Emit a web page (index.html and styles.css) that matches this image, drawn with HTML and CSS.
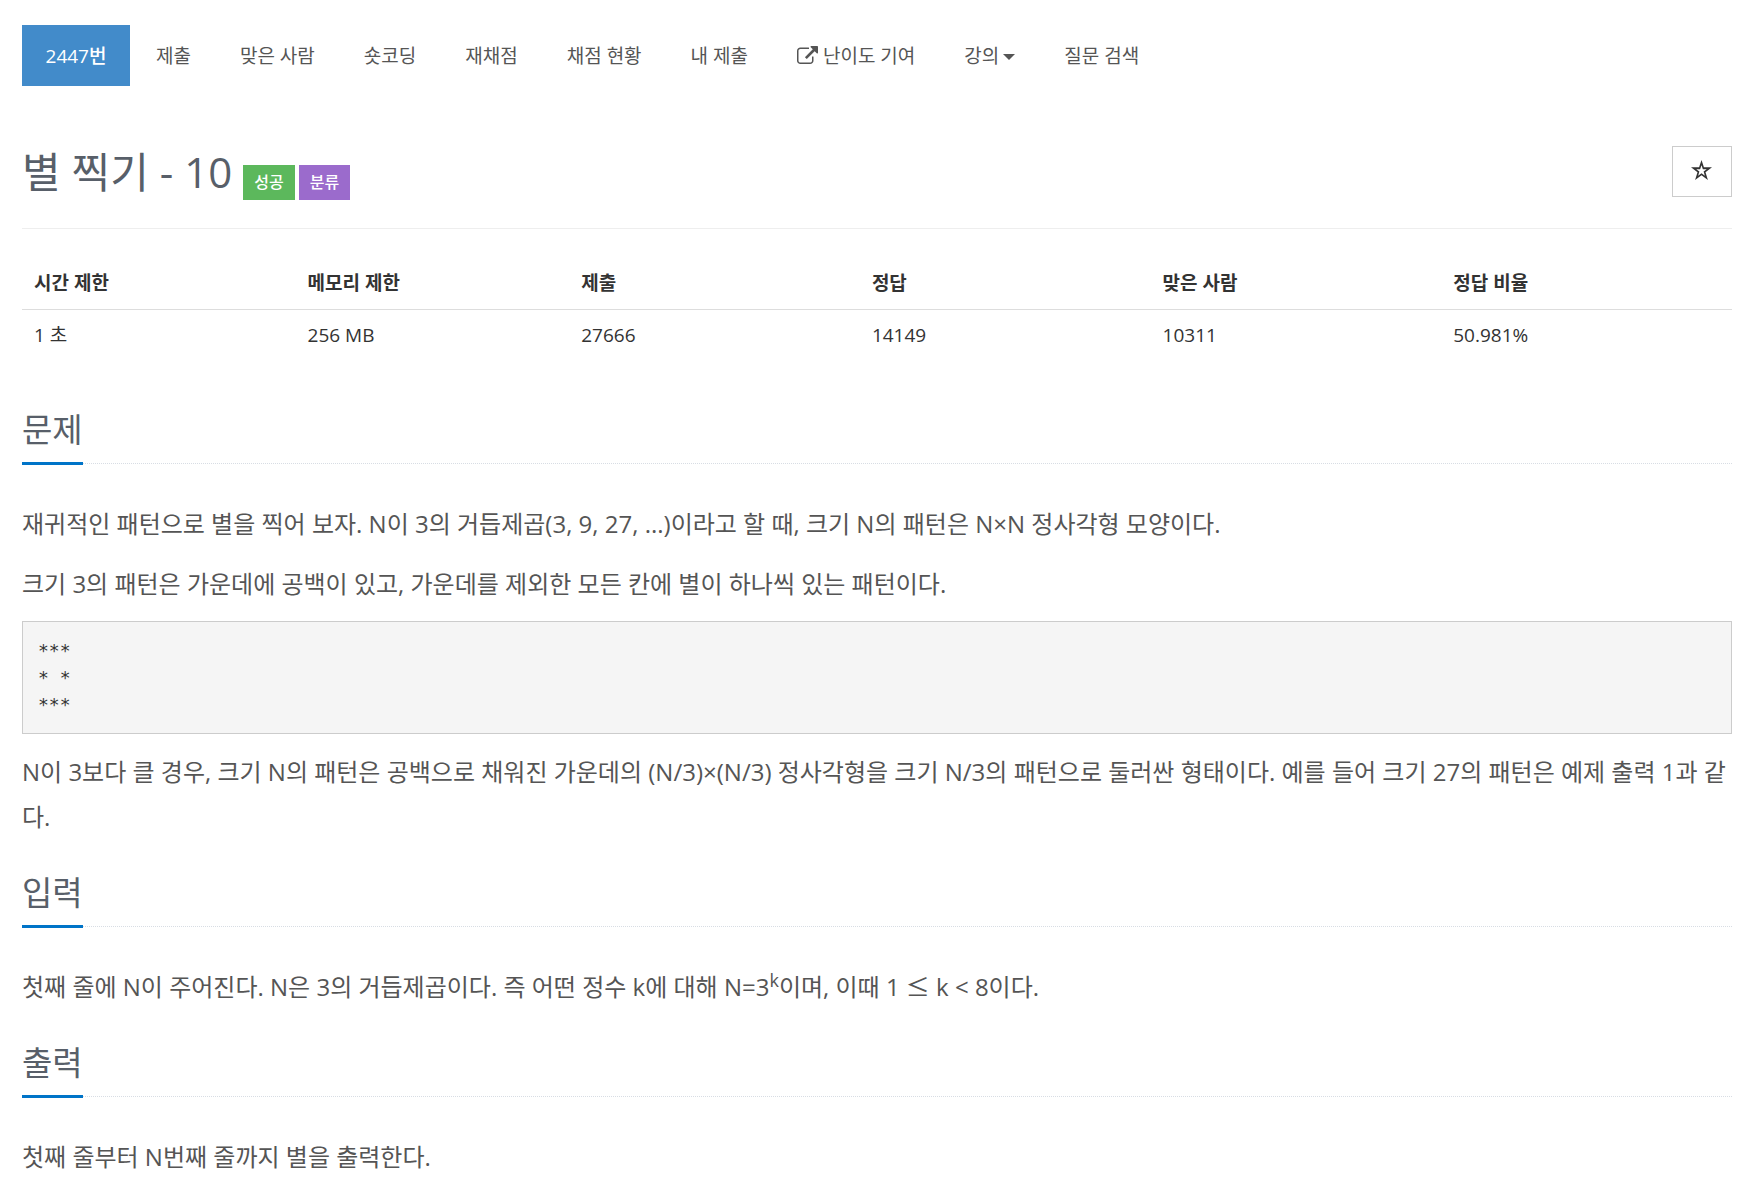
FILE: index.html
```
<!DOCTYPE html>
<html lang="ko">
<head>
    <meta charset="UTF-8">
    <title>2447번: 별 찍기 - 10</title>
    <meta name="viewport" content="width=device-width, initial-scale=1">
    <link rel="stylesheet" href="styles.css">
</head>
<body>
    <div class="container">
        <nav>
            <ul class="problem-menu">
                <li class="active"><a href="#">2447번</a></li>
                <li><a href="#">제출</a></li>
                <li><a href="#">맞은 사람</a></li>
                <li><a href="#">숏코딩</a></li>
                <li><a href="#">재채점</a></li>
                <li><a href="#">채점 현황</a></li>
                <li><a href="#">내 제출</a></li>
                <li>
                    <a href="#">
                        <svg class="icon-external" viewBox="0 0 1792 1536" aria-hidden="true"><path d="M1408 928v320q0 119-84.5 203.5t-203.5 84.5h-832q-119 0-203.5-84.5t-84.5-203.5v-832q0-119 84.5-203.5t203.5-84.5h704q14 0 23 9t9 23v64q0 14-9 23t-23 9h-704q-66 0-113 47t-47 113v832q0 66 47 113t113 47h832q66 0 113-47t47-113v-320q0-14 9-23t23-9h64q14 0 23 9t9 23zm384-864v512q0 26-19 45t-45 19-45-19l-176-176-652 652q-10 10-23 10t-23-10l-114-114q-10-10-10-23t10-23l652-652-176-176q-19-19-19-45t19-45 45-19h512q26 0 45 19t19 45z"/></svg>
                        난이도 기여
                    </a>
                </li>
                <li><a href="#">강의<span class="caret"></span></a></li>
                <li><a href="#">질문 검색</a></li>
            </ul>
        </nav>

        <header class="page-header">
            <h1>별 찍기 - 10</h1>
            <div class="labels">
                <span class="label label-success">성공</span>
                <a href="#" class="label label-category">분류</a>
            </div>
            <button type="button" class="favorite" aria-label="즐겨찾기">
                <svg viewBox="0 0 20 20" aria-hidden="true"><path fill-rule="evenodd" d="M10 0l2.300 7H20l-6.200 4.600 2.300 7.400L10 14.500 3.900 19l2.300-7.400L0 7h7.700zM10 5L8.700 8.700H5l3 2.300-1.200 4L10 12.600l3.200 2.400L12 11l3-2.300h-3.700z"/></svg>
            </button>
        </header>

        <table class="problem-info">
            <thead>
                <tr>
                    <th class="col-limit">시간 제한</th>
                    <th class="col-limit">메모리 제한</th>
                    <th class="col-count">제출</th>
                    <th class="col-count">정답</th>
                    <th class="col-count">맞은 사람</th>
                    <th>정답 비율</th>
                </tr>
            </thead>
            <tbody>
                <tr>
                    <td>1 초</td>
                    <td>256 MB</td>
                    <td>27666</td>
                    <td>14149</td>
                    <td>10311</td>
                    <td>50.981%</td>
                </tr>
            </tbody>
        </table>

        <section>
            <div class="headline"><h2>문제</h2></div>
            <p>재귀적인 패턴으로 별을 찍어 보자. N이 3의 거듭제곱(3, 9, 27, ...)이라고 할 때, 크기 N의 패턴은 N×N 정사각형 모양이다.</p>
            <p>크기 3의 패턴은 가운데에 공백이 있고, 가운데를 제외한 모든 칸에 별이 하나씩 있는 패턴이다.</p>
            <pre>***
* *
***</pre>
            <p>N이 3보다 클 경우, 크기 N의 패턴은 공백으로 채워진 가운데의 (N/3)×(N/3) 정사각형을 크기 N/3의 패턴으로 둘러싼 형태이다. 예를 들어 크기 27의 패턴은 예제 출력 1과 같다.</p>
        </section>

        <section>
            <div class="headline"><h2>입력</h2></div>
            <p>첫째 줄에 N이 주어진다. N은 3의 거듭제곱이다. 즉 어떤 정수 k에 대해 N=3<sup>k</sup>이며, 이때 1 <span class="math">≤</span> k &lt; 8이다.</p>
        </section>

        <section>
            <div class="headline"><h2>출력</h2></div>
            <p>첫째 줄부터 N번째 줄까지 별을 출력한다.</p>
        </section>
    </div>
</body>
</html>
```
FILE: styles.css
```
* { box-sizing: border-box; }
body { font-family: "Open Sans", "Noto Sans CJK KR", sans-serif; font-size: 19px; line-height: 27px; color: #333; background: #fff; margin: 0; }
.container { padding: 25px 24px 12px 22px; }
a { text-decoration: none; }

/* menu */
.problem-menu { display: flex; flex-wrap: wrap; gap: 3px; list-style: none; margin: 0 0 60px; padding: 0; }
.problem-menu a { display: flex; align-items: center; padding: 18px 23px 16px; color: #555; }
.problem-menu .active a { justify-content: center; min-width: 108px; background: #428bca; color: #fff; font-weight: 500; }
.icon-external { width: 21px; height: 18px; margin: 0 5px 4px 0; fill: #555; }
.caret { margin-left: 4px; border-top: 6px solid #555; border-left: 6px solid transparent; border-right: 6px solid transparent; }

/* title */
.page-header { display: flex; align-items: baseline; padding-bottom: 28px; border-bottom: 1px solid #eee; }
h1 { margin: 0 11px 0 0; font-size: 42px; line-height: 51px; font-weight: 400; color: #585f69; }
.labels { display: flex; gap: 4px; }
.label { padding: 0 11px; font-size: 16px; line-height: 35px; font-weight: 500; color: #fff; }
.label-success { background: #5cb85c; }
.label-category { background: #9b6bcc; }
.favorite { display: flex; align-items: center; justify-content: center; align-self: flex-start; width: 60px; height: 51px; margin-left: auto; padding: 0 2px 2px 0; background: #fff; border: 1px solid #ccc; cursor: pointer; }
.favorite svg { width: 21px; height: 21px; fill: #333; }

/* limits and counts */
.problem-info { width: 100%; margin: 29px 0 44px; border-collapse: collapse; table-layout: fixed; }
.problem-info th, .problem-info td { padding: 12px; text-align: left; }
.problem-info th { border-bottom: 1px solid #ddd; font-weight: 700; }
.col-limit { width: 16%; }
.col-count { width: 17%; }

/* problem text */
.headline { display: flex; margin: 29px 0 37px; border-bottom: 1px dotted #d8dde4; }
h2 { margin: 0 0 -2px; padding-bottom: 7px; border-bottom: 3px solid #0074c8; font-size: 33px; line-height: 50px; font-weight: 400; color: #585f69; }
p { margin: 0 0 15px; font-size: 24px; line-height: 45px; color: #555; }
sup { font-size: 18px; line-height: 0; }
.math { font-family: "Noto Sans CJK KR", sans-serif; line-height: 0; }
pre { margin: 0 0 15px; padding: 15px; background: #f5f5f5; border: 1px solid #ccc; font-family: "DejaVu Sans Mono", monospace; font-size: 18px; line-height: 27px; color: #333; }
```
